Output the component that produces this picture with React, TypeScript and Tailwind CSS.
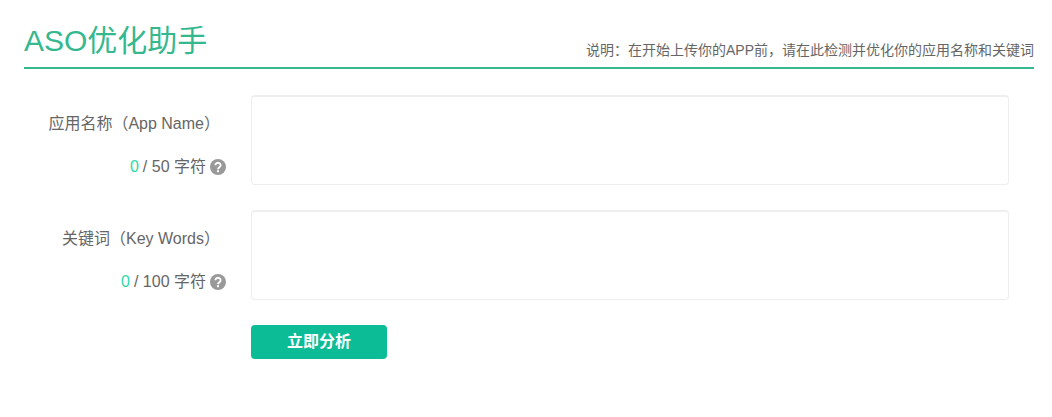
const fontStack = "font-['Liberation_Sans','Noto_Sans_CJK_SC',sans-serif]";

function Field({ label, limit }: { label: string; limit: number }) {
  return (
    <div className="flex h-[90px] items-start">
      <div className="w-[203px] shrink-0 text-right text-[16px] text-[#666]">
        <div className="mt-[18px] h-[22px] pr-[7px] leading-[22px]">{label}</div>
        <div className="mt-[21px] flex h-[22px] items-center justify-end leading-[22px]">
          <span className="text-[#2ed8a8]">0</span>
          <span className="ml-1">/ {limit} 字符</span>
          <svg viewBox="0 0 16 16" className="ml-[5px] h-4 w-4 -translate-x-px">
            <circle cx="8" cy="8" r="8" fill="#999" />
            <path d="M5.4 6.2a2.6 2.4 0 1 1 4 2c-.9.6-1.4 1-1.4 2" fill="none" stroke="#fff" strokeWidth="1.9" />
            <rect x="7" y="11.2" width="2" height="2" fill="#fff" />
          </svg>
        </div>
      </div>
      <textarea className="ml-6 h-[90px] w-[758px] resize-none rounded border border-t-2 border-[#eeeeee] bg-white outline-none" />
    </div>
  );
}

export default function App() {
  return (
    <div className={`h-[417px] bg-white px-[24px] pt-[18px] ${fontStack}`}>
      <header className="flex h-[51px] w-[1010px] items-start justify-between border-b-2 border-[#36b88f]">
        <h1 className="text-[30px] leading-[46px] font-normal text-[#36b88f]">ASO优化助手</h1>
        <p className="mt-[22px] text-[14px] leading-[20px] text-[#666]">
          说明：在开始上传你的APP前，请在此检测并优化你的应用名称和关键词
        </p>
      </header>
      <main className="mt-[26px] flex flex-col gap-[25px]">
        <Field label="应用名称（App Name）" limit={50} />
        <Field label="关键词（Key Words）" limit={100} />
        <div className="pl-[227px]">
          <button className="h-[34px] w-[136px] rounded bg-[#0cbc96] text-[16px] font-bold text-white">
            立即分析
          </button>
        </div>
      </main>
    </div>
  );
}
